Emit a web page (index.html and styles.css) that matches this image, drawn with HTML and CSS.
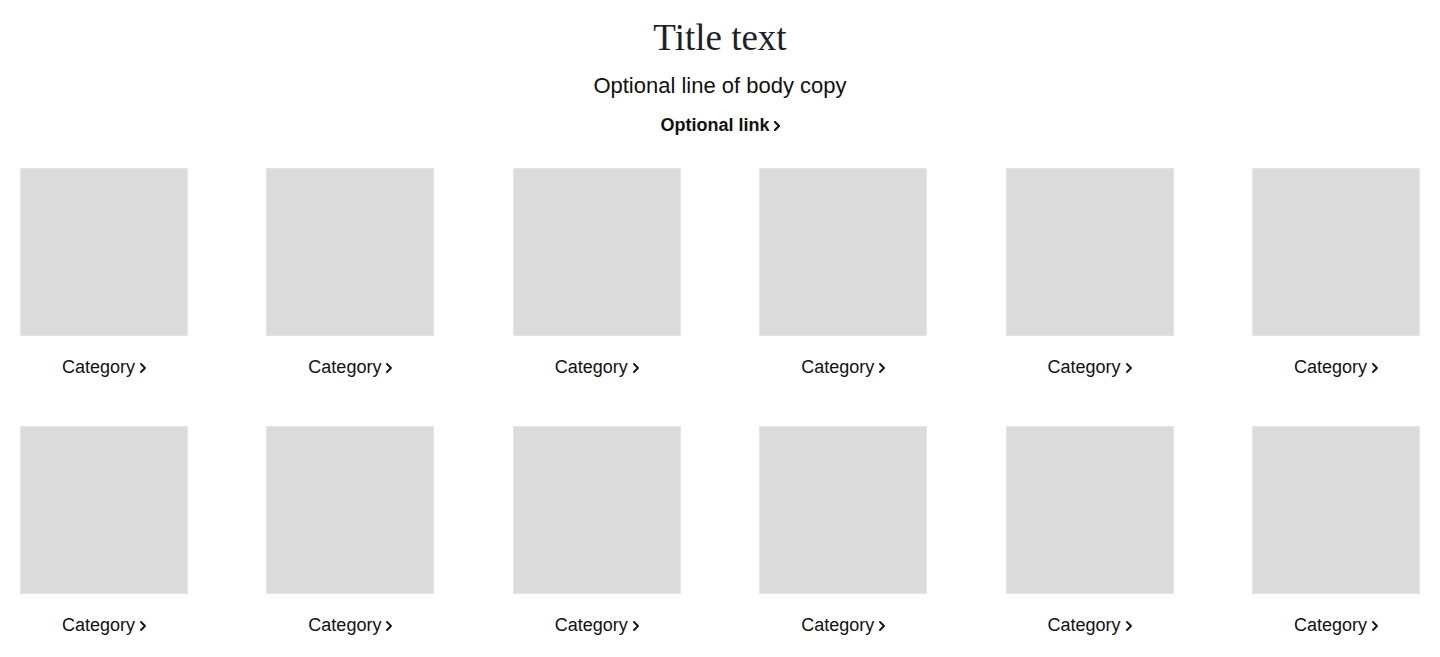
FILE: index.html
```html
<!DOCTYPE html>
<html lang="en">
<head>
<meta charset="utf-8">
<title>Categories</title>
<link rel="stylesheet" href="styles.css">
</head>
<body>
<section class="module">
  <header class="intro">
    <h1 class="title">Title text</h1>
    <p class="body-copy">Optional line of body copy</p>
    <a class="link" href="#">Optional link<svg class="chev chev-bold" viewBox="0 0 6 10" aria-hidden="true"><path d="M1 1l4 4-4 4"/></svg></a>
  </header>
  <div class="grid">
    <a class="tile" href="#"><span class="thumb"></span><span class="label">Category<svg class="chev" viewBox="0 0 6 10" aria-hidden="true"><path d="M1 1l4 4-4 4"/></svg></span></a>
    <a class="tile" href="#"><span class="thumb"></span><span class="label">Category<svg class="chev" viewBox="0 0 6 10" aria-hidden="true"><path d="M1 1l4 4-4 4"/></svg></span></a>
    <a class="tile" href="#"><span class="thumb"></span><span class="label">Category<svg class="chev" viewBox="0 0 6 10" aria-hidden="true"><path d="M1 1l4 4-4 4"/></svg></span></a>
    <a class="tile" href="#"><span class="thumb"></span><span class="label">Category<svg class="chev" viewBox="0 0 6 10" aria-hidden="true"><path d="M1 1l4 4-4 4"/></svg></span></a>
    <a class="tile" href="#"><span class="thumb"></span><span class="label">Category<svg class="chev" viewBox="0 0 6 10" aria-hidden="true"><path d="M1 1l4 4-4 4"/></svg></span></a>
    <a class="tile" href="#"><span class="thumb"></span><span class="label">Category<svg class="chev" viewBox="0 0 6 10" aria-hidden="true"><path d="M1 1l4 4-4 4"/></svg></span></a>
    <a class="tile" href="#"><span class="thumb"></span><span class="label">Category<svg class="chev" viewBox="0 0 6 10" aria-hidden="true"><path d="M1 1l4 4-4 4"/></svg></span></a>
    <a class="tile" href="#"><span class="thumb"></span><span class="label">Category<svg class="chev" viewBox="0 0 6 10" aria-hidden="true"><path d="M1 1l4 4-4 4"/></svg></span></a>
    <a class="tile" href="#"><span class="thumb"></span><span class="label">Category<svg class="chev" viewBox="0 0 6 10" aria-hidden="true"><path d="M1 1l4 4-4 4"/></svg></span></a>
    <a class="tile" href="#"><span class="thumb"></span><span class="label">Category<svg class="chev" viewBox="0 0 6 10" aria-hidden="true"><path d="M1 1l4 4-4 4"/></svg></span></a>
    <a class="tile" href="#"><span class="thumb"></span><span class="label">Category<svg class="chev" viewBox="0 0 6 10" aria-hidden="true"><path d="M1 1l4 4-4 4"/></svg></span></a>
    <a class="tile" href="#"><span class="thumb"></span><span class="label">Category<svg class="chev" viewBox="0 0 6 10" aria-hidden="true"><path d="M1 1l4 4-4 4"/></svg></span></a>
  </div>
</section>
</body>
</html>
```
FILE: styles.css
```css
* { box-sizing: border-box; }

html, body {
  margin: 0;
  padding: 0;
  background: #ffffff;
}

body {
  font-family: "Liberation Sans", Arial, sans-serif;
  color: #111111;
}

.module {
  padding: 16px 20px 0;
}

.intro {
  display: flex;
  flex-direction: column;
  align-items: center;
  text-align: center;
}

.title {
  margin: 0;
  font-family: "Liberation Serif", "Times New Roman", serif;
  font-weight: 400;
  font-size: 37px;
  line-height: 44px;
  color: #1d2125;
}

.body-copy {
  margin: 12px 0 0;
  font-size: 22px;
  line-height: 28px;
  color: #111111;
}

.link {
  margin-top: 13px;
  display: inline-flex;
  align-items: center;
  font-size: 18px;
  line-height: 24px;
  font-weight: 700;
  color: #111111;
  text-decoration: none;
}

.grid {
  margin-top: 31px;
  display: grid;
  grid-template-columns: repeat(6, 168px);
  justify-content: space-between;
  row-gap: 47px;
}

.tile {
  display: flex;
  flex-direction: column;
  align-items: center;
  text-decoration: none;
  color: #111111;
}

.thumb {
  display: block;
  width: 168px;
  height: 168px;
  background: #dbdbdb;
  border: 1px solid #e4e4e4;
}

.label {
  margin-top: 19px;
  display: inline-flex;
  align-items: center;
  font-size: 18px;
  line-height: 24px;
}

.chev {
  width: 6px;
  height: 10px;
  margin-left: 5px;
  margin-top: 1px;
  fill: none;
  stroke: #111111;
  stroke-width: 1.8;
  stroke-linecap: round;
  stroke-linejoin: round;
}

.chev-bold {
  margin-left: 4px;
  margin-top: 1px;
  stroke-width: 2.2;
}
```
